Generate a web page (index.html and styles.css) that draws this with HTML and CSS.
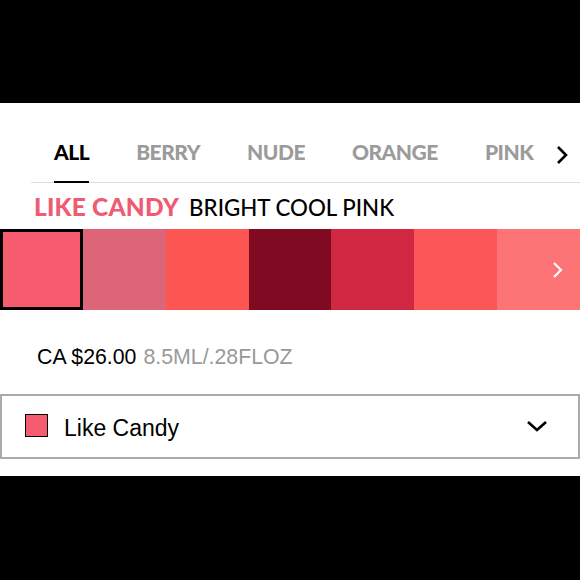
FILE: index.html
```html
<!DOCTYPE html>
<html>
<head>
<meta charset="utf-8">
<link rel="stylesheet" href="styles.css">
</head>
<body>
<div class="page">
  <nav class="tabs">
    <div class="tab-list">
      <span class="tab active">ALL</span>
      <span class="tab">BERRY</span>
      <span class="tab">NUDE</span>
      <span class="tab">ORANGE</span>
      <span class="tab">PINK</span>
    </div>
    <svg class="tab-next" width="12" height="20" viewBox="0 0 12 20"><path d="M2 2 L10 10 L2 18" fill="none" stroke="#000" stroke-width="2.6"/></svg>
  </nav>
  <h1 class="title"><span class="shade">LIKE CANDY</span><span class="desc">BRIGHT COOL PINK</span></h1>
  <div class="swatches">
    <div class="swatch selected s1"></div>
    <div class="swatch s2"></div>
    <div class="swatch s3"></div>
    <div class="swatch s4"></div>
    <div class="swatch s5"></div>
    <div class="swatch s6"></div>
    <div class="swatch s7">
      <svg class="swatch-next" width="12" height="18" viewBox="0 0 12 18"><path d="M2 2 L9 9 L2 16" fill="none" stroke="#fff" stroke-width="2.2"/></svg>
    </div>
  </div>
  <p class="price"><span class="amount">CA $26.00</span><span class="size">8.5ML/.28FLOZ</span></p>
  <div class="select">
    <span class="chip"></span>
    <span class="select-label">Like Candy</span>
    <svg class="select-arrow" width="22" height="12" viewBox="0 0 22 12"><path d="M2 2 L11 10 L20 2" fill="none" stroke="#000" stroke-width="2.6"/></svg>
  </div>
</div>
</body>
</html>
```

FILE: styles.css
```css
html, body {
  margin: 0;
  padding: 0;
  background: #000;
}
.page {
  margin-top: 103px;
  height: 373px;
  background: #fff;
  overflow: hidden;
}
.tabs {
  margin-left: 31px;
  height: 80px;
  border-bottom: 1px solid #dcdcdc;
  display: flex;
  align-items: stretch;
  box-sizing: border-box;
}
.tab-list {
  display: flex;
  gap: 47px;
  padding-left: 23px;
  flex: 1;
}
.tab {
  flex: none;
  font-family: "Lato", sans-serif;
  font-weight: 900;
  font-size: 21px;
  color: #9b9b9b;
  letter-spacing: -0.5px;
  padding-top: 37px;
  line-height: 24px;
  box-sizing: border-box;
}
.tab.active {
  color: #000;
  border-bottom: 2px solid #000;
  margin-bottom: -1px;
}
.tab-next {
  flex: none;
  margin: 42px 12px 0 0;
}
.title {
  margin: 0;
  padding: 8px 0 0 34px;
  height: 46px;
  box-sizing: border-box;
  font-family: "Lato", sans-serif;
  line-height: 26px;
  font-weight: 400;
  white-space: nowrap;
}
.shade {
  color: #ef5b72;
  font-weight: 900;
  font-size: 24.5px;
  letter-spacing: 0.2px;
}
.desc {
  color: #000;
  font-weight: 500;
  font-size: 22.3px;
  margin-left: 10px;
}
.swatches {
  display: grid;
  grid-template-columns: repeat(7, 1fr);
  height: 81px;
}
.swatch {
  min-width: 0;
  box-sizing: border-box;
}
.swatch.selected {
  border: 3px solid #000;
}
.s1 { background: #f65b70; }
.s2 { background: #dd6578; }
.s3 { background: #fd5552; }
.s4 { background: #7f0a21; }
.s5 { background: #d02843; }
.s6 { background: #fc5758; }
.s7 {
  background: #fd7476;
  display: flex;
  align-items: center;
  justify-content: flex-end;
  padding-right: 16px;
}
.price {
  margin: 0;
  padding: 35px 0 0 37px;
  height: 84px;
  box-sizing: border-box;
  font-family: "Liberation Sans", sans-serif;
  font-size: 21.3px;
  line-height: 24px;
}
.amount { color: #000; }
.size {
  color: #999;
  margin-left: 7px;
}
.select {
  height: 65px;
  border: 2px solid #ababab;
  box-sizing: border-box;
  display: flex;
  align-items: center;
  padding: 0 30px 0 23px;
}
.chip {
  width: 23px;
  height: 23px;
  box-sizing: border-box;
  border: 1px solid #000;
  background: #f65b70;
  margin-top: -2px;
}
.select-label {
  flex: 1;
  margin-left: 16px;
  padding-top: 4px;
  font-family: "Liberation Sans", sans-serif;
  font-size: 23px;
  color: #000;
}
.select-arrow {
  margin-top: -2px;
}
```
